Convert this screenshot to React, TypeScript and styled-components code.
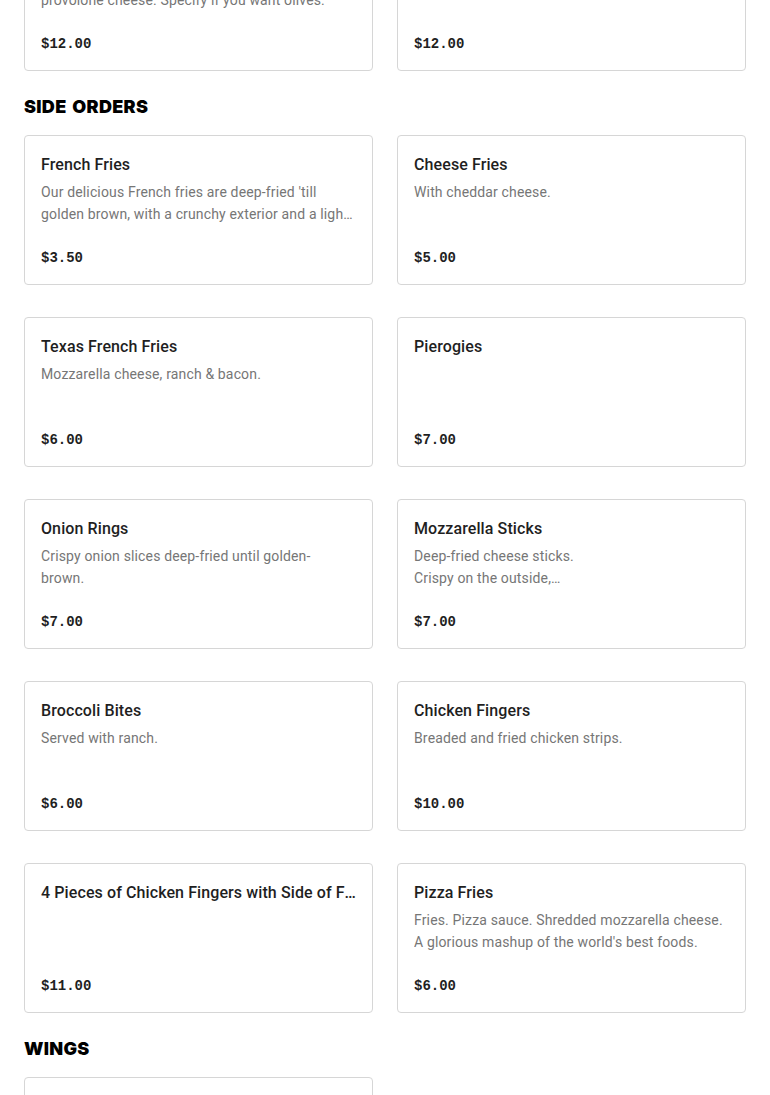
import React from 'react';
import styled, { createGlobalStyle } from 'styled-components';

const GlobalStyle = createGlobalStyle`
  html, body {
    margin: 0;
    padding: 0;
    background: #ffffff;
    overflow: hidden;
  }
  body {
    font-family: Roboto, 'Noto Sans', sans-serif;
    color: #1f1f1f;
  }
`;

interface IItem {
  name: string;
  description?: string;
  price: string;
}

interface ISection {
  title?: string;
  items: IItem[];
}

const menu: ISection[] = [
  {
    items: [
      {
        name: 'Italian Hoagie',
        description: 'Ham, salami, capicola, lettuce, tomato, onion and\nprovolone cheese. Specify if you want olives.',
        price: '$12.00',
      },
      {
        name: 'Steak Hoagie',
        description: 'Lettuce, tomato, onion.',
        price: '$12.00',
      },
    ],
  },
  {
    title: 'Side Orders',
    items: [
      {
        name: 'French Fries',
        description:
          "Our delicious French fries are deep-fried 'till golden brown, with a crunchy exterior and a light fluffy interior.",
        price: '$3.50',
      },
      { name: 'Cheese Fries', description: 'With cheddar cheese.', price: '$5.00' },
      { name: 'Texas French Fries', description: 'Mozzarella cheese, ranch & bacon.', price: '$6.00' },
      { name: 'Pierogies', price: '$7.00' },
      { name: 'Onion Rings', description: 'Crispy onion slices deep-fried until golden-\nbrown.', price: '$7.00' },
      {
        name: 'Mozzarella Sticks',
        description: 'Deep-fried cheese sticks.\nCrispy on the outside,\ngooey on the inside.',
        price: '$7.00',
      },
      { name: 'Broccoli Bites', description: 'Served with ranch.', price: '$6.00' },
      { name: 'Chicken Fingers', description: 'Breaded and fried chicken strips.', price: '$10.00' },
      { name: '4 Pieces of Chicken Fingers with Side of French Fries', price: '$11.00' },
      {
        name: 'Pizza Fries',
        description: "Fries. Pizza sauce. Shredded mozzarella cheese.\nA glorious mashup of the world's best foods.",
        price: '$6.00',
      },
    ],
  },
  {
    title: 'Wings',
    items: [{ name: 'Wings (6)', description: 'Choice of sauce.', price: '$9.00' }],
  },
];

// the screenshot is taken part way down the menu
const Page = styled.main`
  display: flex;
  flex-direction: column;
  gap: 24px;
  padding: 0 24px 40px;
  margin-top: -79px;
`;

const Section = styled.section`
  display: flex;
  flex-direction: column;
  gap: 16px;
`;

const SectionTitle = styled.h2`
  margin: 0;
  font-family: Inter, 'Noto Sans', sans-serif;
  font-size: 18px;
  line-height: 24px;
  font-weight: 900;
  letter-spacing: 0.3px;
  word-spacing: 2px;
  text-transform: uppercase;
  color: #000000;
`;

const Grid = styled.div`
  display: grid;
  grid-template-columns: 1fr 1fr;
  column-gap: 24px;
  row-gap: 32px;
`;

const Card = styled.div`
  display: flex;
  flex-direction: column;
  padding: 17px 16px 16px;
  border: 1px solid #d6d6d6;
  border-radius: 4px;
  background: #ffffff;
  min-width: 0;
`;

const Name = styled.div`
  font-size: 16px;
  line-height: 24px;
  font-weight: 500;
  letter-spacing: 0.1px;
  color: #1f1f1f;
  white-space: nowrap;
  overflow: hidden;
  text-overflow: ellipsis;
`;

const Description = styled.div`
  margin-top: 4px;
  height: 44px;
  font-size: 14px;
  line-height: 22px;
  letter-spacing: 0.15px;
  color: #767676;
  white-space: pre-line;
  display: -webkit-box;
  -webkit-line-clamp: 2;
  -webkit-box-orient: vertical;
  overflow: hidden;
`;

const Price = styled.div`
  margin-top: 23px;
  font-family: 'Liberation Mono', 'DejaVu Sans Mono', monospace;
  font-size: 14px;
  line-height: 20px;
  font-weight: 700;
  color: #1f1f1f;
`;

const MenuCard: React.FC<{ item: IItem }> = ({ item }) => (
  <Card>
    <Name>{item.name}</Name>
    <Description>{item.description}</Description>
    <Price>{item.price}</Price>
  </Card>
);

const App: React.FC = () => (
  <>
    <GlobalStyle />
    <Page>
      {menu.map((section, i) => (
        <Section key={i}>
          {section.title && <SectionTitle>{section.title}</SectionTitle>}
          <Grid>
            {section.items.map((item) => (
              <MenuCard key={item.name} item={item} />
            ))}
          </Grid>
        </Section>
      ))}
    </Page>
  </>
);

export default App;
